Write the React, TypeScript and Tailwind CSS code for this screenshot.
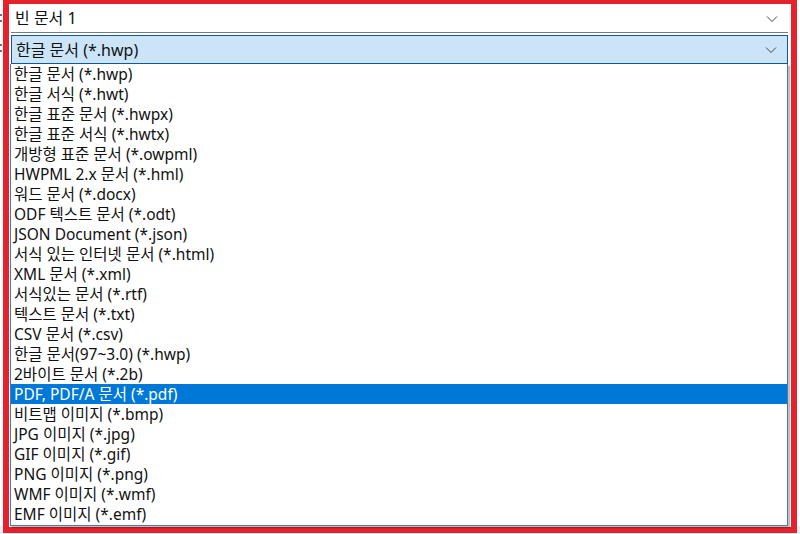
import React from "react";

const items = [
  "한글 문서 (*.hwp)",
  "한글 서식 (*.hwt)",
  "한글 표준 문서 (*.hwpx)",
  "한글 표준 서식 (*.hwtx)",
  "개방형 표준 문서 (*.owpml)",
  "HWPML 2.x 문서 (*.hml)",
  "워드 문서 (*.docx)",
  "ODF 텍스트 문서 (*.odt)",
  "JSON Document (*.json)",
  "서식 있는 인터넷 문서 (*.html)",
  "XML 문서 (*.xml)",
  "서식있는 문서 (*.rtf)",
  "텍스트 문서 (*.txt)",
  "CSV 문서 (*.csv)",
  "한글 문서(97~3.0) (*.hwp)",
  "2바이트 문서 (*.2b)",
  "PDF, PDF/A 문서 (*.pdf)",
  "비트맵 이미지 (*.bmp)",
  "JPG 이미지 (*.jpg)",
  "GIF 이미지 (*.gif)",
  "PNG 이미지 (*.png)",
  "WMF 이미지 (*.wmf)",
  "EMF 이미지 (*.emf)",
];

function Chevron() {
  return (
    <svg width="12" height="8" viewBox="0 0 12 8" className="shrink-0">
      <path d="M1 1.5 L6 6.5 L11 1.5" fill="none" stroke="#444" strokeWidth="1" />
    </svg>
  );
}

export default function App() {
  return (
    <div
      className="relative w-[800px] h-[534px] overflow-hidden bg-white text-[15.5px] text-[#111]"
      style={{ fontFamily: '"Noto Sans", "Noto Sans CJK KR", sans-serif' }}
    >
      {/* left edge colons */}
      <div className="absolute left-[-1px] top-[7px] text-[14px] leading-[20px] text-[#333]">:</div>
      <div className="absolute left-[-1px] top-[37px] text-[14px] leading-[20px] text-[#333]">:</div>
      {/* bottom strip */}
      <div className="absolute left-0 right-0 bottom-0 h-[8px] bg-[#eceff3]" />
      {/* red frame */}
      <div className="absolute left-[3px] top-[-2px] w-[794px] h-[535px] border-[6px] border-[#e3222b] flex flex-col pl-[1px] pt-[2px] pr-[3px] bg-white">
        <div className="h-[27px] ml-[1px] flex items-center justify-between px-[4px] pr-[10px] border-b border-[#7a7a7a] bg-white">
          <span className="leading-[20px] -mt-[3px] text-[16px]">빈 문서 1</span>
          <Chevron />
        </div>
        <div className="mt-[2px] h-[29px] ml-[1px] flex items-center justify-between pl-[4px] pr-[10px] bg-[#cce4f7] border border-[#0a5a9c]">
          <span className="leading-[20px] text-[16px]">한글 문서 (*.hwp)</span>
          <Chevron />
        </div>
        <div className="h-[462px] border border-t-0 border-[#3f7fb5] bg-white shadow-[2px_2px_1px_rgba(0,0,0,0.25)] flex flex-col">
          {items.map((t, i) => (
            <div
              key={i}
              className={
                "h-[20px] shrink-0 pl-[3px] leading-[20px] whitespace-nowrap " +
                (i === 16 ? "bg-[#0078d7] text-white" : "")
              }
            >
              {t}
            </div>
          ))}
        </div>
      </div>
    </div>
  );
}
